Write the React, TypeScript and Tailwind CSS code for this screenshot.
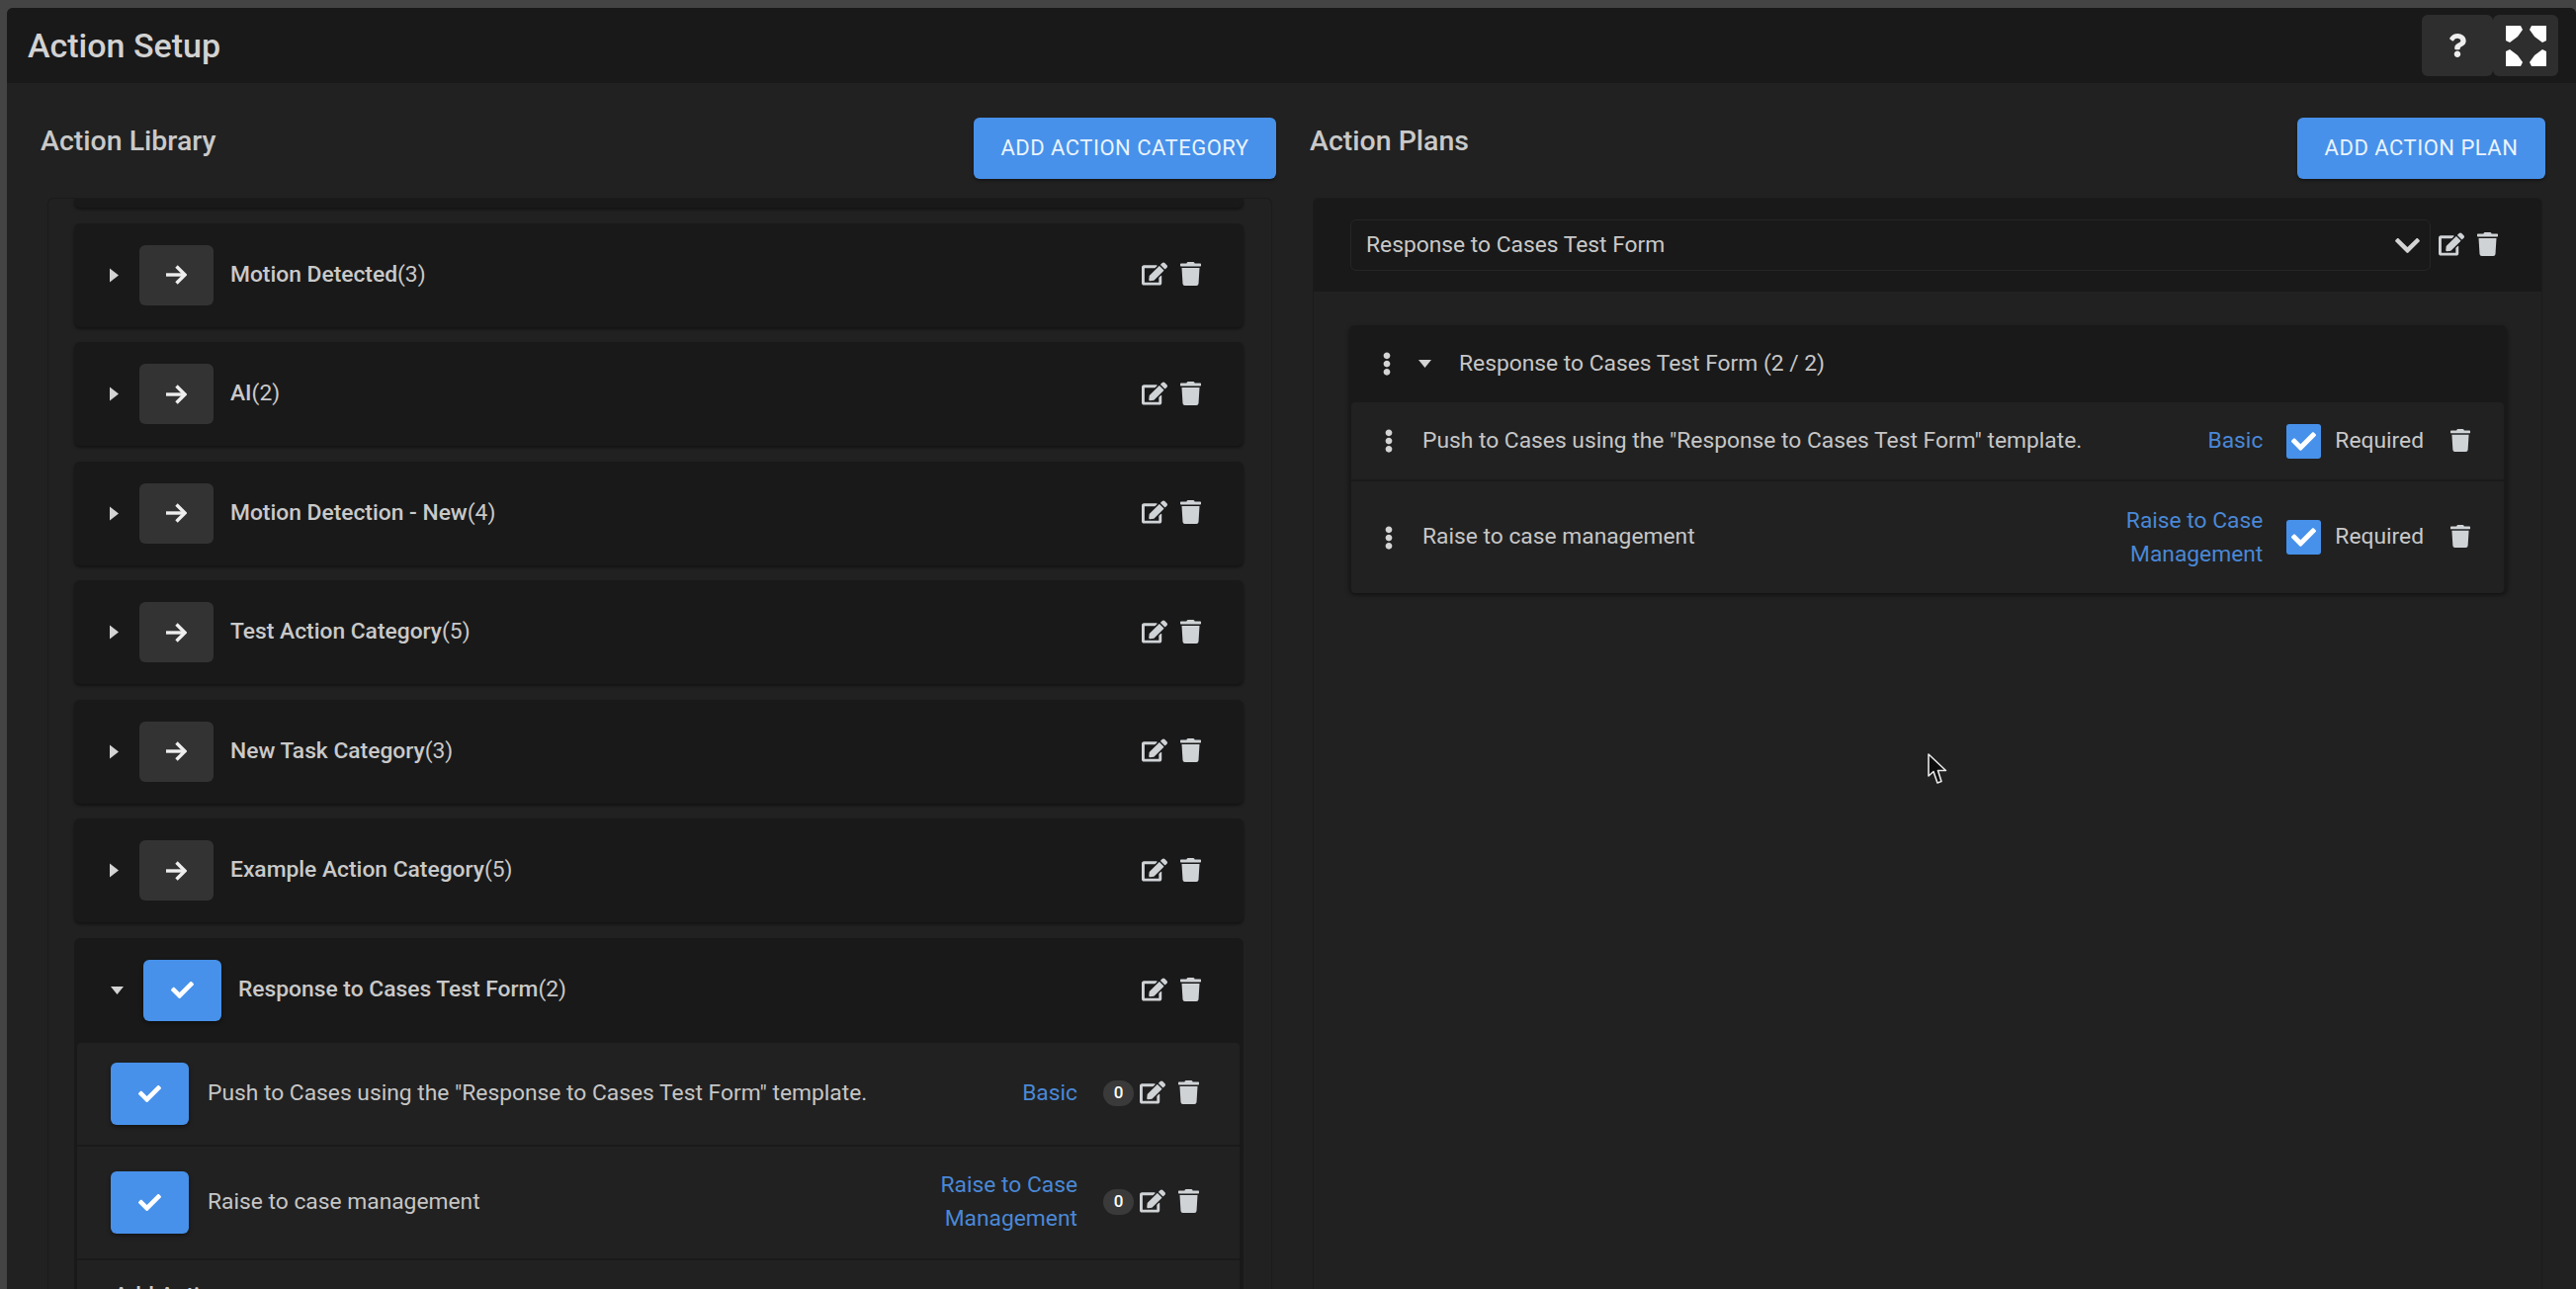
import { FaCheck, FaEdit, FaEllipsisV, FaQuestion, FaTrash, FaChevronDown } from "react-icons/fa";

const categories = [
    { name: "Motion Detected", count: 3 },
    { name: "AI", count: 2 },
    { name: "Motion Detection - New", count: 4 },
    { name: "Test Action Category", count: 5 },
    { name: "New Task Category", count: 3 },
    { name: "Example Action Category", count: 5 },
];

function CaretRight() {
    return (
        <svg viewBox="0 0 9 15" className="w-[9px] h-[15px] fill-[#d4d4d4]">
            <path d="M0 0.5 L9 7.5 L0 14.5 Z" />
        </svg>
    );
}

function CaretDown() {
    return (
        <svg viewBox="0 0 13 8" className="w-[13px] h-[8px] fill-[#d4d4d4]">
            <path d="M0 0 H13 L6.5 8 Z" />
        </svg>
    );
}

function ArrowIcon() {
    return (
        <svg viewBox="0 0 21 20" className="w-[21px] h-[20px] fill-none stroke-[#eeeeee]" strokeWidth="3.4">
            <path d="M0 10 H19" />
            <path d="M10.5 1.5 L19 10 L10.5 18.5" />
        </svg>
    );
}

function ExpandIcon() {
    return (
        <svg viewBox="0 0 41 41" className="w-[41px] h-[41px] fill-white">
            <path d="M0 0 H15 L17 4 L12 11 L4 17 L0 15 Z" />
            <path d="M41 0 H26 L24 4 L29 11 L37 17 L41 15 Z" />
            <path d="M0 41 H15 L17 37 L12 30 L4 24 L0 26 Z" />
            <path d="M41 41 H26 L24 37 L29 30 L37 24 L41 26 Z" />
        </svg>
    );
}

function RowIcons() {
    return (
        <div className="flex items-center gap-[13px] mb-[2px] text-[#d0d3d6] shrink-0">
            <FaEdit className="w-[26px] h-[24px]" />
            <FaTrash className="w-[21px] h-[24px]" />
        </div>
    );
}

function CategoryCard({ name, count }: { name: string; count: number }) {
    return (
        <div className="h-[105px] shrink-0 bg-[#191919] rounded-md shadow-[0_2px_3px_rgba(0,0,0,0.45)] flex items-center pl-[36px] pr-[43px]">
            <div className="w-[30px] shrink-0">
                <CaretRight />
            </div>
            <div className="w-[75px] h-[61px] shrink-0 bg-[#333333] rounded-md flex items-center justify-center">
                <ArrowIcon />
            </div>
            <div className="flex-1 ml-[17px] font-medium text-[#c9c9c9]">
                {name}
                <span className="font-normal">({count})</span>
            </div>
            <RowIcons />
        </div>
    );
}

function BlueCheck({ h }: { h: string }) {
    return (
        <div className={`w-[79px] ${h} shrink-0 bg-[#4791ea] rounded-md flex items-center justify-center text-white shadow-[0_2px_4px_rgba(0,0,0,0.4)]`}>
            <FaCheck className="w-[23px] h-[23px]" />
        </div>
    );
}

function ActionRow({ text, link, height }: { text: string; link: React.ReactNode; height: string }) {
    return (
        <div className={`${height} flex items-center pl-[34px] pr-[41px] border-b-2 border-[#1a1a1a]`}>
            <BlueCheck h="h-[63px]" />
            <div className="flex-1 ml-[19px] text-[#c6c6c6]">{text}</div>
            <div className="text-right text-[#4a88d6] leading-[34px] mr-[26px]">{link}</div>
            <div className="w-[31px] h-[26px] rounded-full bg-[#3a3a3a] text-white text-[17px] font-medium flex items-center justify-center mr-[6px]">
                0
            </div>
            <RowIcons />
        </div>
    );
}

function PlanRow({ text, link, height, border }: { text: string; link: React.ReactNode; height: string; border?: boolean }) {
    return (
        <div className={`${height} flex items-center pl-[32px] pr-[34px] ${border ? "border-b-2 border-[#1a1a1a]" : ""}`}>
            <FaEllipsisV className="w-[12px] h-[24px] text-[#d4d4d4] shrink-0" />
            <div className="flex-1 ml-[28px] text-[#c6c6c6]">{text}</div>
            <div className="text-right text-[#4a88d6] leading-[34px] mr-[24px]">{link}</div>
            <div className="w-[35px] h-[35px] shrink-0 bg-[#4791ea] rounded-[3px] flex items-center justify-center text-white">
                <FaCheck className="w-[25px] h-[25px]" />
            </div>
            <div className="ml-[14px] text-[#c9c9c9]">Required</div>
            <FaTrash className="w-[20px] h-[23px] ml-[27px] mb-[2px] text-[#d0d3d6]" />
        </div>
    );
}

function BlueButton({ label, width }: { label: string; width: string }) {
    return (
        <button className={`${width} h-[62px] bg-[#4791ea] rounded-md text-[22px] tracking-[0.5px] text-[#eaf3fd] pb-px shrink-0 shadow-[0_2px_3px_rgba(0,0,0,0.35)]`}>
            {label}
        </button>
    );
}

export default function App() {
    return (
        <div className="relative h-screen w-screen overflow-hidden bg-[#444444] pl-[7px] pt-[8px] font-['Roboto',sans-serif] text-[22.8px]">
            <div className="h-full flex flex-col bg-[#212121] rounded-t-md overflow-hidden">
                <header className="h-[76px] shrink-0 bg-[#191919] flex items-center justify-between pl-[21px] pr-[18px]">
                    <h1 className="text-[34px] font-medium text-[#d2d2d2]">Action Setup</h1>
                    <div className="flex h-[62px]">
                        <div className="w-[72px] bg-[#2e2e2e] rounded-md flex items-center justify-center text-[#eeeeee]">
                            <FaQuestion className="w-[24px] h-[24px]" />
                        </div>
                        <div className="w-[66px] bg-[#2e2e2e] rounded-md flex items-center justify-center">
                            <ExpandIcon />
                        </div>
                    </div>
                </header>

                <main className="flex-1 min-h-0 flex pt-[35px] pl-[34px] pr-[31px] gap-[34px]">
                    {/* action library */}
                    <section className="w-[1250px] flex flex-col min-h-0">
                        <div className="flex items-start justify-between">
                            <h2 className="text-[28.5px] font-medium leading-[48px] text-[#c9c9c9]">Action Library</h2>
                            <BlueButton label="ADD ACTION CATEGORY" width="w-[306px]" />
                        </div>
                        <div className="flex-1 min-h-0 mt-[19px] ml-[7px] mr-[4px] border-x border-t border-[#1b1b1b] rounded-t-md overflow-hidden pl-[26px] pr-[28px] flex flex-col gap-[15.5px]">
                            <div className="h-[9px] shrink-0 bg-[#191919] rounded-b-md shadow-[0_2px_3px_rgba(0,0,0,0.45)]" />
                            {categories.map((c) => (
                                <CategoryCard key={c.name} name={c.name} count={c.count} />
                            ))}

                            <div className="shrink-0 bg-[#191919] rounded-t-md">
                                <div className="h-[106px] flex items-center pl-[37px] pr-[43px]">
                                    <div className="w-[33px] shrink-0">
                                        <CaretDown />
                                    </div>
                                    <BlueCheck h="h-[62px]" />
                                    <div className="flex-1 ml-[17px] font-medium text-[#c9c9c9]">
                                        Response to Cases Test Form<span className="font-normal">(2)</span>
                                    </div>
                                    <RowIcons />
                                </div>
                                <div className="ml-[3px] mr-[4px] bg-[#212121] rounded-t-sm">
                                    <ActionRow
                                        height="h-[105px]"
                                        text={'Push to Cases using the "Response to Cases Test Form" template.'}
                                        link="Basic"
                                    />
                                    <ActionRow
                                        height="h-[115px]"
                                        text="Raise to case management"
                                        link={
                                            <>
                                                Raise to Case
                                                <br />
                                                Management
                                            </>
                                        }
                                    />
                                    <div className="pl-[37px] pt-[19px] font-medium text-[#c9c9c9]">Add Action</div>
                                </div>
                            </div>
                        </div>
                    </section>

                    {/* action plans */}
                    <section className="flex-1 flex flex-col min-h-0">
                        <div className="flex items-start justify-between">
                            <h2 className="text-[28.5px] font-medium leading-[48px] text-[#c9c9c9]">Action Plans</h2>
                            <BlueButton label="ADD ACTION PLAN" width="w-[251px]" />
                        </div>
                        <div className="flex-1 min-h-0 mt-[19px] mx-[3px] border-x border-t border-[#1b1b1b] rounded-t-md overflow-hidden flex flex-col">
                            <div className="h-[94px] shrink-0 bg-[#191919] flex items-center pl-[37px] pr-[44px]">
                                <div className="flex-1 h-[52px] border border-[#262626] rounded-md flex items-center justify-between pl-[15px] pr-[8px] text-[#c9c9c9]">
                                    <span>Response to Cases Test Form</span>
                                    <FaChevronDown className="w-[29px] h-[29px] text-[#d4d4d4]" />
                                </div>
                                <div className="ml-[8px]">
                                    <RowIcons />
                                </div>
                            </div>
                            <div className="flex-1 min-h-0 pt-[34px] pl-[36px] pr-[35px]">
                                <div className="bg-[#191919] rounded-md shadow-[0_2px_4px_rgba(0,0,0,0.5)]">
                                    <div className="h-[78px] flex items-center pl-[32px]">
                                        <FaEllipsisV className="w-[12px] h-[24px] text-[#d4d4d4] shrink-0" />
                                        <div className="ml-[26px]">
                                            <CaretDown />
                                        </div>
                                        <div className="ml-[28px] text-[#c6c6c6]">Response to Cases Test Form (2 / 2)</div>
                                    </div>
                                    <div className="ml-[2px] mr-[3px] bg-[#212121] rounded-sm">
                                        <PlanRow
                                            border
                                            height="h-[80px]"
                                            text={'Push to Cases using the "Response to Cases Test Form" template.'}
                                            link="Basic"
                                        />
                                        <PlanRow
                                            height="h-[113px]"
                                            text="Raise to case management"
                                            link={
                                                <>
                                                    Raise to Case
                                                    <br />
                                                    Management
                                                </>
                                            }
                                        />
                                    </div>
                                </div>
                            </div>
                        </div>
                    </section>
                </main>
            </div>

            {/* mouse pointer */}
            <svg viewBox="0 0 20 32" className="absolute left-[1950px] top-[762px] w-[20px] h-[32px]">
                <path d="M1 1 V23 L6 18.5 L10 30 L14 28.5 L10.5 17.5 H18.5 Z" fill="#0c0c0c" stroke="#e8e8e8" strokeWidth="1.6" strokeLinejoin="round" />
            </svg>
        </div>
    );
}
